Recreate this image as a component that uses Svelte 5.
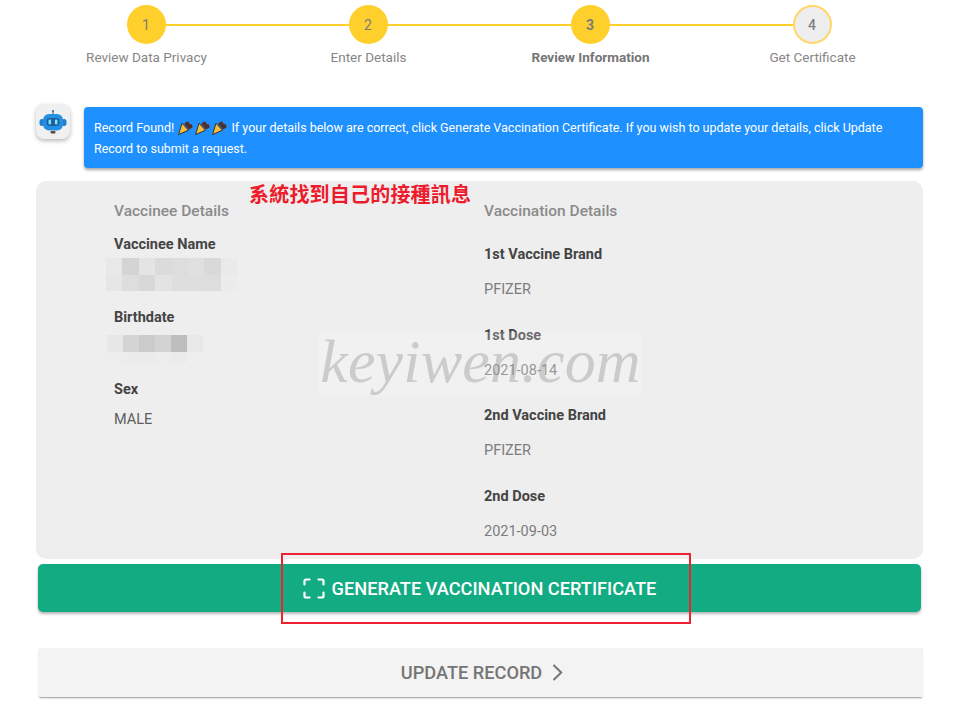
<script>
  const steps = [
    { n: 1, label: "Review Data Privacy" },
    { n: 2, label: "Enter Details" },
    { n: 3, label: "Review Information", current: true },
    { n: 4, label: "Get Certificate", todo: true }
  ];

  const rightFields = [
    { label: "1st Vaccine Brand", value: "PFIZER" },
    { label: "1st Dose", value: "2021-08-14" },
    { label: "2nd Vaccine Brand", value: "PFIZER" },
    { label: "2nd Dose", value: "2021-09-03" }
  ];

  // grey levels of the pixelated (censored) blocks
  const nameBlur = [
    [232, 212, 228, 219, 221, 224, 217, 234],
    [230, 221, 216, 227, 222, 222, 221, 236]
  ];
  const dateBlur = [
    [231, 212, 203, 211, 190, 232],
    [237, 236, 235, 237, 235, 238]
  ];
</script>

<div class="page">
  <div class="stepper">
    {#each steps as step, i}
      <div class="step" class:current={step.current} class:todo={step.todo}>
        {#if i < steps.length - 1}<span class="line"></span>{/if}
        <span class="dot">{step.n}</span>
        <span class="step-label">{step.label}</span>
      </div>
    {/each}
  </div>

  <div class="message">
    <div class="avatar">
      <svg width="28" height="24" viewBox="0 0 28 24">
        <rect x="13.4" y="0.5" width="1.2" height="4" fill="#3d6fa8" />
        <circle cx="14" cy="1" r="1" fill="#3d6fa8" />
        <rect x="0.5" y="9" width="5" height="7" rx="2.5" fill="#1f7fd0" />
        <rect x="22.5" y="9" width="5" height="7" rx="2.5" fill="#1f7fd0" />
        <rect x="4" y="4" width="20" height="16.5" rx="6" fill="#2490e4" />
        <rect x="7.5" y="8" width="13" height="8" rx="3" fill="#1b5f9e" />
        <rect x="9.5" y="9.5" width="2.6" height="5" rx="1" fill="#7fe0f5" />
        <rect x="15.9" y="9.5" width="2.6" height="5" rx="1" fill="#7fe0f5" />
        <rect x="11.5" y="21" width="5" height="2.4" rx="1" fill="#5a4a42" />
      </svg>
    </div>
    <div class="alert">
      Record Found!
      <span class="poppers">
        {#each [0, 1, 2] as _}
          <svg class="popper" width="15" height="14" viewBox="0 0 15 14">
            <path d="M4 2.2 L10.4 9.2 L0.6 13.6 Z" fill="#f7bd3e" stroke="#33251a" stroke-width="0.9" stroke-linejoin="round" />
            <path d="M6.2 3 C7.6 1.2 9.2 0.8 10.4 0.6 L11.6 3 L14 3.6 L14.6 6.4 L11 8.6 Z" fill="#5b2c1e" />
            <circle cx="9.4" cy="4.6" r="1.1" fill="#2e4058" />
            <circle cx="12.2" cy="5.6" r="0.8" fill="#2e4058" />
          </svg>
        {/each}
      </span>
      If your details below are correct, click Generate Vaccination Certificate. If you wish to update your details, click Update Record to submit a request.
    </div>
  </div>

  <div class="panel">
    <div class="col left">
      <h3>Vaccinee Details</h3>
      <div class="label name-label">Vaccinee Name</div>
      <div class="blur name-blur">
        {#each nameBlur as row}
          {#each row as g}
            <i style="background: rgb({g},{g},{g})"></i>
          {/each}
        {/each}
      </div>
      <div class="label birth-label">Birthdate</div>
      <div class="blur date-blur">
        {#each dateBlur as row}
          {#each row as g}
            <i style="background: rgb({g},{g},{g})"></i>
          {/each}
        {/each}
      </div>
      <div class="label sex-label">Sex</div>
      <div class="value sex-value">MALE</div>
    </div>
    <div class="col right">
      <h3>Vaccination Details</h3>
      {#each rightFields as field}
        <div class="field">
          <div class="label">{field.label}</div>
          <div class="value">{field.value}</div>
        </div>
      {/each}
    </div>
  </div>

  <button class="btn generate">
    <svg width="22" height="21" viewBox="0 0 22 21" fill="none" stroke="#fff" stroke-width="2.2" stroke-linecap="round" stroke-linejoin="round">
      <path d="M1.5 6.5 V3 Q1.5 1.5 3 1.5 H6.5" />
      <path d="M15.5 1.5 H19 Q20.5 1.5 20.5 3 V6.5" />
      <path d="M20.5 14.5 V18 Q20.5 19.5 19 19.5 H15.5" />
      <path d="M6.5 19.5 H3 Q1.5 19.5 1.5 18 V14.5" />
    </svg>
    GENERATE VACCINATION CERTIFICATE
  </button>

  <button class="btn update">
    UPDATE RECORD
    <svg width="11" height="17" viewBox="0 0 11 17" fill="none" stroke="#757575" stroke-width="2">
      <path d="M1.5 1 L9.2 8.5 L1.5 16" />
    </svg>
  </button>

  <!-- stuff pasted on top of the screenshot -->
  <div class="note">系統找到自己的接種訊息</div>
  <div class="watermark">keyiwen.com</div>
  <div class="redbox"></div>
</div>

<style>
  :global(body) {
    margin: 0;
    background: #fff;
  }

  .page {
    position: relative;
    width: 960px;
    height: 728px;
    box-sizing: border-box;
    padding: 5px 37px 0 36px;
    overflow: hidden;
    font-family: Roboto, "Liberation Sans", sans-serif;
    color: #757575;
  }

  .stepper {
    display: grid;
    grid-template-columns: repeat(4, 222px);
  }

  .step {
    position: relative;
    display: flex;
    flex-direction: column;
    align-items: center;
    left: -1px;
  }

  .line {
    position: absolute;
    left: 50%;
    top: 19px;
    width: 222px;
    height: 2px;
    background: #ffd02c;
  }

  .dot {
    position: relative;
    box-sizing: border-box;
    width: 39px;
    height: 39px;
    border-radius: 50%;
    background: #ffd02c;
    color: #7b7b7b;
    font-size: 14px;
    display: flex;
    align-items: center;
    justify-content: center;
  }

  .step-label {
    margin: 5px 0 0 1px;
    font-size: 13.5px;
    line-height: 17px;
    color: #868686;
    white-space: nowrap;
  }

  .current .dot {
    font-weight: 700;
  }

  .current .step-label {
    font-weight: 700;
    color: #757575;
  }

  .todo .dot {
    background: #eeeeee;
    border: 2px solid #ffd768;
    font-weight: 500;
    color: #808080;
  }

  .message {
    display: flex;
    gap: 14px;
    margin-top: 41px;
  }

  .avatar {
    flex: none;
    width: 34px;
    height: 35px;
    margin-top: -3px;
    border-radius: 8px;
    background: #f0f0f0;
    box-shadow: 0 2px 4px rgba(0, 0, 0, 0.28);
    display: flex;
    align-items: center;
    justify-content: center;
  }

  .alert {
    flex: 1;
    box-sizing: border-box;
    height: 61px;
    padding: 10px 10px 0;
    border-radius: 4px;
    background: #1e90ff;
    color: #fff;
    font-size: 12.5px;
    line-height: 21px;
    box-shadow: 0 2px 3px rgba(0, 0, 0, 0.35);
  }

  .poppers {
    display: inline-flex;
    gap: 2px;
    margin: 0 1px;
    vertical-align: -3px;
  }

  .panel {
    display: flex;
    box-sizing: border-box;
    height: 378px;
    margin-top: 13px;
    padding: 21px 0 0 78px;
    border-radius: 10px;
    background: #eeeeee;
  }

  .col.left {
    width: 370px;
  }

  h3 {
    margin: 0;
    font-size: 15.5px;
    line-height: 18px;
    font-weight: 500;
    color: #8a8a8a;
  }

  .label {
    font-size: 14.5px;
    line-height: 18px;
    font-weight: 700;
    color: #444;
  }

  .value {
    font-size: 14.5px;
    line-height: 18px;
    color: #7c7c7c;
  }

  .name-label {
    margin-top: 16px;
  }

  .blur {
    display: grid;
    position: relative;
  }

  .blur i {
    display: block;
  }

  .name-blur {
    grid-template-columns: repeat(8, 16.4px);
    grid-auto-rows: 16.5px;
    margin: 4px 0 0 -8px;
  }

  .birth-label {
    margin-top: 18px;
  }

  .date-blur {
    grid-template-columns: repeat(6, 16px);
    grid-template-rows: 17px 11px;
    margin: 8px 0 0 -7px;
  }

  .sex-label {
    margin-top: 18px;
  }

  .sex-value {
    margin-top: 12px;
    color: #5e5e5e;
  }

  .col.right h3 {
    margin-bottom: 26px;
  }

  .field {
    height: 80.67px;
  }

  .field .value {
    margin-top: 17px;
  }

  .btn {
    display: flex;
    align-items: center;
    justify-content: center;
    border: none;
    padding: 0;
    font-family: inherit;
    font-size: 18.2px;
    font-weight: 500;
    white-space: nowrap;
  }

  .generate {
    width: 883px;
    height: 48px;
    margin: 5px 0 0 2px;
    gap: 7px;
    border-radius: 5px;
    background: #12ab82;
    color: #fff;
    box-shadow: 0 2px 3px rgba(0, 0, 0, 0.3);
  }

  .update {
    box-sizing: border-box;
    width: 885px;
    height: 49px;
    margin: 36px 0 0 2px;
    padding-left: 3px;
    gap: 10px;
    border-radius: 3px 0 0 3px;
    background: #f3f3f3;
    color: #757575;
    box-shadow: 0 2px 2px -1px rgba(0, 0, 0, 0.4);
  }

  .note {
    position: absolute;
    left: 249px;
    top: 181px;
    font-family: "Noto Sans CJK TC", sans-serif;
    font-size: 20px;
    line-height: 26px;
    font-weight: 700;
    letter-spacing: 0.2px;
    color: #ec1c2c;
    white-space: nowrap;
  }

  .watermark {
    position: absolute;
    left: 319px;
    top: 332px;
    width: 323px;
    height: 64px;
    text-align: center;
    background: rgba(255, 255, 255, 0.22);
    font-family: "Liberation Serif", serif;
    font-style: italic;
    font-size: 62px;
    line-height: 58px;
    letter-spacing: 0.2px;
    color: rgba(130, 130, 130, 0.34);
    white-space: nowrap;
  }

  .redbox {
    position: absolute;
    left: 281px;
    top: 553px;
    width: 410px;
    height: 71px;
    box-sizing: border-box;
    border: 2px solid #ee2233;
  }
</style>
